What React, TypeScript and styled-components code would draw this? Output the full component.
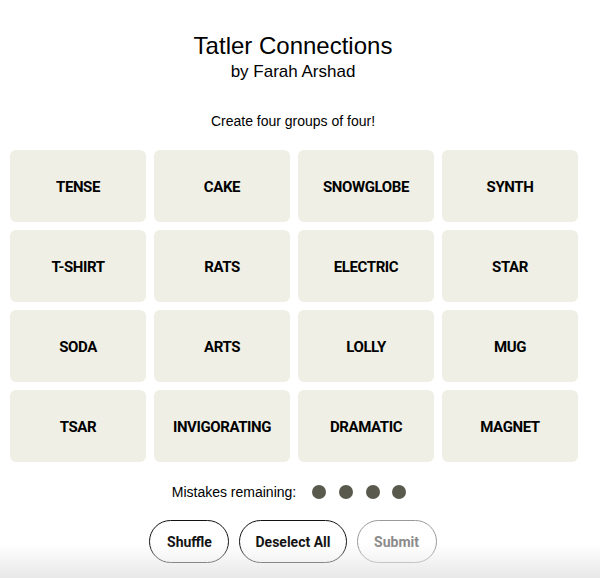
import React from "react";
import styled, { createGlobalStyle } from "styled-components";

const GlobalStyle = createGlobalStyle`
  html, body {
    margin: 0;
    padding: 0;
    background: #fff;
  }
  body {
    font-family: "Liberation Sans", Arial, sans-serif;
    color: #000;
  }
`;

const words = [
  "TENSE", "CAKE", "SNOWGLOBE", "SYNTH",
  "T-SHIRT", "RATS", "ELECTRIC", "STAR",
  "SODA", "ARTS", "LOLLY", "MUG",
  "TSAR", "INVIGORATING", "DRAMATIC", "MAGNET",
];

const App: React.FC = () => {
  return (
    <>
      <GlobalStyle />
      <Page>
        <Header>
          <Title>Tatler Connections</Title>
          <Byline>by Farah Arshad</Byline>
        </Header>
        <Instruction>Create four groups of four!</Instruction>
        <Board>
          {words.map((w) => (
            <Tile key={w}>{w}</Tile>
          ))}
        </Board>
        <Mistakes>
          <MistakesLabel>Mistakes remaining:</MistakesLabel>
          <Dots>
            <Dot />
            <Dot />
            <Dot />
            <Dot />
          </Dots>
        </Mistakes>
        <Controls>
          <PillButton>Shuffle</PillButton>
          <PillButton>Deselect All</PillButton>
          <PillButton disabled>Submit</PillButton>
        </Controls>
      </Page>
      <BottomFade />
    </>
  );
};
export default App;

const Page = styled.div`
  width: 586px;
  padding-top: 31px;
  padding-bottom: 40px;
`;

const Header = styled.div`
  text-align: center;
`;

const Title = styled.h1`
  margin: 0;
  font-size: 24px;
  line-height: 29px;
  font-weight: 400;
`;

const Byline = styled.div`
  margin-top: 2px;
  font-size: 17px;
  line-height: 20px;
`;

const Instruction = styled.p`
  margin: 30px 0 0;
  text-align: center;
  font-size: 14px;
  line-height: 18px;
`;

const Board = styled.div`
  width: 568px;
  margin: 20px 0 0 10px;
  display: grid;
  grid-template-columns: repeat(4, 1fr);
  grid-auto-rows: 72px;
  column-gap: 8px;
  row-gap: 8px;
`;

const Tile = styled.div`
  display: flex;
  align-items: center;
  justify-content: center;
  padding-top: 2px;
  background: #efefe6;
  border-radius: 6px;
  font-family: Roboto, "Liberation Sans", Arial, sans-serif;
  font-weight: 700;
  font-size: 15px;
  letter-spacing: -0.4px;
  color: #000;
`;

const Mistakes = styled.div`
  margin-top: 21px;
  display: flex;
  align-items: center;
  justify-content: center;
  gap: 16px;
  padding-right: 8px;
`;

const MistakesLabel = styled.span`
  font-size: 14px;
  line-height: 18px;
`;

const Dots = styled.div`
  display: flex;
  gap: 12.7px;
`;

const Dot = styled.span`
  width: 14px;
  height: 14px;
  border-radius: 50%;
  background: #5a594e;
`;

const Controls = styled.div`
  margin-top: 19px;
  display: flex;
  justify-content: center;
  gap: 10px;
`;

const PillButton = styled.button`
  height: 43px;
  padding: 0 15px;
  min-width: 80px;
  border-radius: 22px;
  border: 1px solid ${(p) => (p.disabled ? "#9a9a9a" : "#121212")};
  background: #fff;
  color: ${(p) => (p.disabled ? "#8a8a8a" : "#121212")};
  font-family: Roboto, "Liberation Sans", Arial, sans-serif;
  font-weight: 700;
  font-size: 14px;
  cursor: ${(p) => (p.disabled ? "default" : "pointer")};
`;

const BottomFade = styled.div`
  position: fixed;
  left: 0;
  right: 0;
  bottom: 0;
  height: 34px;
  pointer-events: none;
  background: linear-gradient(to bottom, rgba(235, 235, 235, 0), rgba(232, 232, 232, 1));
`;
